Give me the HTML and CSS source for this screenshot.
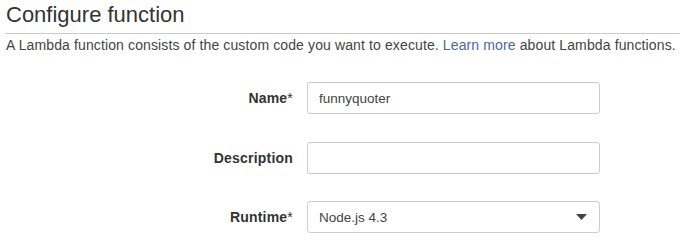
FILE: index.html
```html
<!DOCTYPE html>
<html lang="en">
  <head>
    <meta charset="UTF-8" />
    <title>Configure function</title>
    <link rel="stylesheet" href="styles.css">
  </head>
  <body>
    <div class="section">
      <h2 class="title">Configure function</h2>
      <p class="intro">
        A Lambda function consists of the custom code you want to execute.
        <a href="#">Learn more</a> about Lambda functions.
      </p>

      <div class="form">
        <label for="name" class="label">Name<span class="req">*</span></label>
        <input type="text" id="name" class="field" value="funnyquoter" />

        <label for="desc" class="label">Description</label>
        <input type="text" id="desc" class="field" />

        <label for="runtime" class="label">Runtime<span class="req">*</span></label>
        <div class="select">
          <span>Node.js 4.3</span>
          <svg class="caret" width="11" height="6" viewBox="0 0 11 6">
            <path d="M0 0 L11 0 L5.5 6 Z" fill="#444" />
          </svg>
        </div>
      </div>
    </div>
  </body>
</html>
```

FILE: styles.css
```css
body {
  margin: 0;
  background: #fff;
  color: #333;
  font-family: "Liberation Sans", Arial, sans-serif;
}
.section {
  padding: 0 0 0 5px;
}
.title {
  margin: 0;
  padding: 2px 0 0 1px;
  font-size: 22px;
  font-weight: normal;
  line-height: 26px;
  color: #333;
  border-bottom: 1px solid #ccc;
  box-sizing: border-box;
  height: 34px;
}
.intro {
  margin: 0;
  padding: 3px 0 0 1px;
  font-size: 14px;
  letter-spacing: 0.12px;
  line-height: 17px;
  color: #444;
  white-space: nowrap;
}
.intro a {
  color: #4a67a8;
  text-decoration: none;
}
.form {
  display: grid;
  grid-template-columns: 288px 293px;
  column-gap: 14px;
  row-gap: 27.5px;
  margin-top: 28px;
  align-items: center;
}
.label {
  text-align: right;
  font-size: 14px;
  letter-spacing: 0.2px;
  font-weight: bold;
  color: #333;
}
.req {
  font-weight: normal;
}
.field,
.select {
  height: 32px;
  box-sizing: border-box;
  border: 1px solid #ccc;
  border-radius: 3px;
  padding: 0 11px;
  font-family: "Liberation Sans", Arial, sans-serif;
  font-size: 13.5px;
  color: #444;
  background: #fff;
  outline: none;
}
.select {
  display: flex;
  align-items: center;
  justify-content: space-between;
  padding-right: 12px;
}
```
